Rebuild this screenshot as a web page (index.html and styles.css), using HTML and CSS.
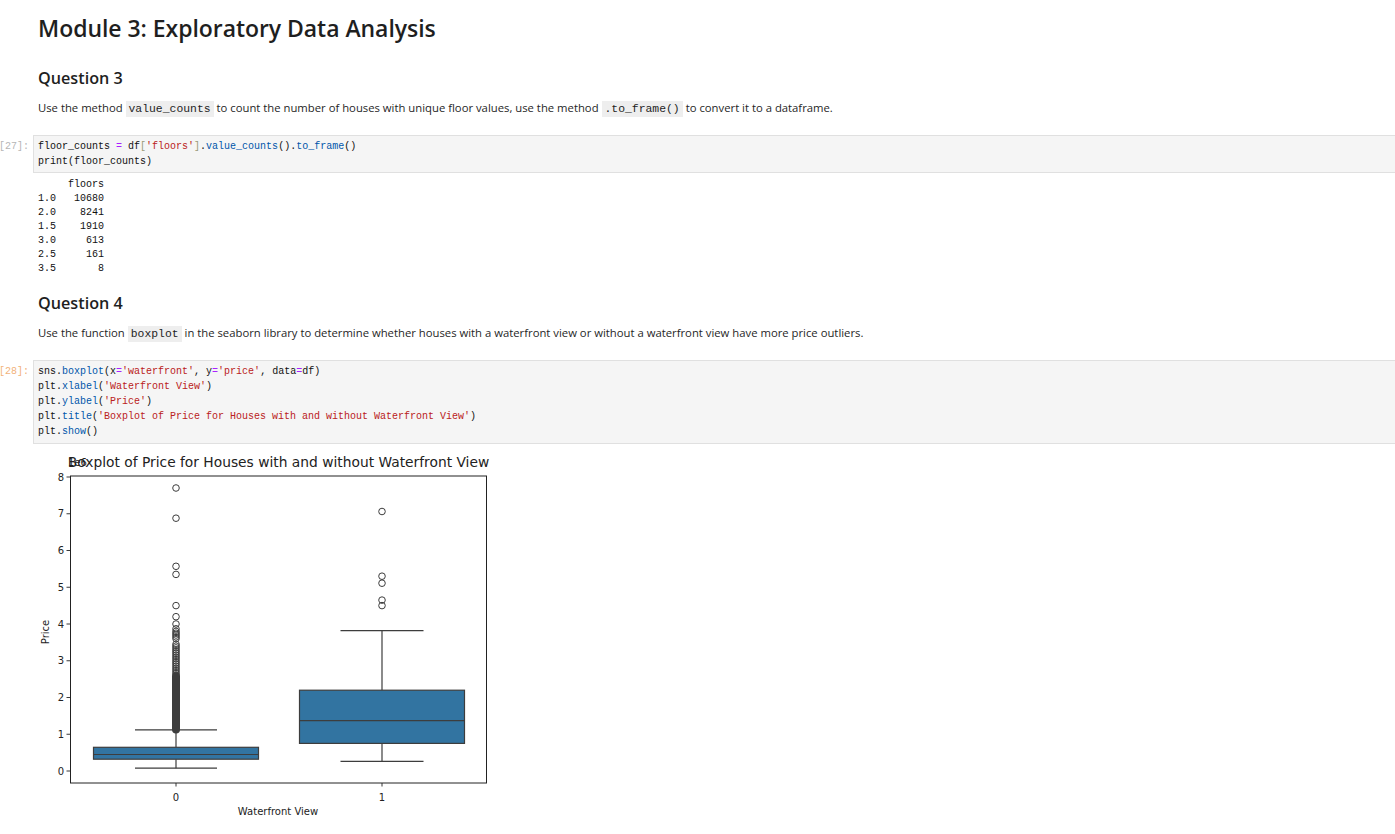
FILE: index.html
```html
<!DOCTYPE html>
<html>
<head>
<meta charset="utf-8">
<link rel="stylesheet" href="styles.css">
</head>
<body>
<div class="notebook">
  <div class="row md">
    <div class="prompt"></div>
    <div class="content">
      <h1 class="h1">Module 3: Exploratory Data Analysis</h1>
      <h2 class="h2">Question 3</h2>
      <p class="para">Use the method <code class="ic">value_counts</code> to count the number of houses with unique floor values, use the method <code class="ic">.to_frame()</code> to convert it to a dataframe.</p>
    </div>
  </div>

  <div class="row code-row first-code">
    <div class="prompt"><span>[27]:</span></div>
    <div class="codebox"><pre class="code">floor_counts <span class="op">=</span> df<span class="br">[</span><span class="st">'floors'</span><span class="br">]</span>.<span class="pr">value_counts</span>().<span class="pr">to_frame</span>()
print(floor_counts)</pre></div>
  </div>
  <div class="row">
    <div class="prompt"></div>
    <pre class="output">     floors
1.0   10680
2.0    8241
1.5    1910
3.0     613
2.5     161
3.5       8</pre>
  </div>

  <div class="row md">
    <div class="prompt"></div>
    <div class="content">
      <h2 class="h2 q4">Question 4</h2>
      <p class="para">Use the function <code class="ic">boxplot</code> in the seaborn library to determine whether houses with a waterfront view or without a waterfront view have more price outliers.</p>
    </div>
  </div>

  <div class="row code-row">
    <div class="prompt active"><span>[28]:</span></div>
    <div class="codebox tall"><pre class="code">sns.<span class="pr">boxplot</span>(x<span class="op">=</span><span class="st">'waterfront'</span>, y<span class="op">=</span><span class="st">'price'</span>, data<span class="op">=</span>df)
plt.<span class="pr">xlabel</span>(<span class="st">'Waterfront View'</span>)
plt.<span class="pr">ylabel</span>(<span class="st">'Price'</span>)
plt.<span class="pr">title</span>(<span class="st">'Boxplot of Price for Houses with and without Waterfront View'</span>)
plt.<span class="pr">show</span>()</pre></div>
  </div>

  <div class="row plot-row">
    <svg class="plot" width="470" height="380" viewBox="0 0 470 380" xmlns="http://www.w3.org/2000/svg">
      <g class="ax-text">
        <text x="245.5" y="17" text-anchor="middle" font-size="13.8">Boxplot of Price for Houses with and without Waterfront View</text>
        <text x="35" y="16" font-size="10">1e6</text>
      </g>
      <!-- y ticks -->
      <g stroke="#222" stroke-width="0.9">
        <line x1="33.5" y1="321" x2="37" y2="321"/>
        <line x1="33.5" y1="284.25" x2="37" y2="284.25"/>
        <line x1="33.5" y1="247.5" x2="37" y2="247.5"/>
        <line x1="33.5" y1="210.75" x2="37" y2="210.75"/>
        <line x1="33.5" y1="174" x2="37" y2="174"/>
        <line x1="33.5" y1="137.25" x2="37" y2="137.25"/>
        <line x1="33.5" y1="100.5" x2="37" y2="100.5"/>
        <line x1="33.5" y1="63.75" x2="37" y2="63.75"/>
        <line x1="33.5" y1="27" x2="37" y2="27"/>
        <line x1="143" y1="333" x2="143" y2="336.5"/>
        <line x1="349" y1="333" x2="349" y2="336.5"/>
      </g>
      <g class="ax-text" font-size="10" text-anchor="end">
        <text x="31" y="324.5">0</text>
        <text x="31" y="287.75">1</text>
        <text x="31" y="251">2</text>
        <text x="31" y="214.25">3</text>
        <text x="31" y="177.5">4</text>
        <text x="31" y="140.75">5</text>
        <text x="31" y="104">6</text>
        <text x="31" y="67.25">7</text>
        <text x="31" y="30.5">8</text>
      </g>
      <g class="ax-text" font-size="10" text-anchor="middle">
        <text x="143" y="350.5">0</text>
        <text x="349" y="350.5">1</text>
        <text x="245" y="365">Waterfront View</text>
        <text x="0" y="0" transform="translate(15.5 182) rotate(-90)">Price</text>
      </g>

      <!-- group 0 -->
      <g stroke="#3d3d3d" stroke-width="1.2" fill="none">
        <line x1="143" y1="309.2" x2="143" y2="318.2"/>
        <line x1="102" y1="318.2" x2="184" y2="318.2"/>
        <line x1="143" y1="297.3" x2="143" y2="279.8"/>
        <line x1="102" y1="279.8" x2="184" y2="279.8"/>
        <rect x="60.5" y="297.3" width="165" height="11.9" fill="#3274a1"/>
        <line x1="60.5" y1="304.5" x2="225.5" y2="304.5"/>
      </g>
      <g stroke="#3d3d3d" fill="none">
        <line x1="143" y1="279.5" x2="143" y2="226" stroke-width="8" stroke-linecap="round"/>
        <g stroke-width="1">
          <circle cx="143" cy="223.6" r="3.3"/>
          <circle cx="143" cy="221.8" r="3.3"/>
          <circle cx="143" cy="219.9" r="3.3"/>
          <circle cx="143" cy="218.1" r="3.3"/>
          <circle cx="143" cy="216.3" r="3.3"/>
          <circle cx="143" cy="214.4" r="3.3"/>
          <circle cx="143" cy="212.6" r="3.3"/>
          <circle cx="143" cy="210.8" r="3.3"/>
          <circle cx="143" cy="208.9" r="3.3"/>
          <circle cx="143" cy="207.1" r="3.3"/>
          <circle cx="143" cy="205.3" r="3.3"/>
          <circle cx="143" cy="203.4" r="3.3"/>
          <circle cx="143" cy="201.6" r="3.3"/>
          <circle cx="143" cy="199.8" r="3.3"/>
          <circle cx="143" cy="197.9" r="3.3"/>
          <circle cx="143" cy="196.1" r="3.3"/>
          <circle cx="143" cy="194.2" r="3.3"/>
          <circle cx="143" cy="188.7" r="3.3"/>
          <circle cx="143" cy="186.9" r="3.3"/>
          <circle cx="143" cy="185" r="3.3"/>
          <circle cx="143" cy="183.2" r="3.3"/>
          <circle cx="143" cy="181.4" r="3.3"/>
          <circle cx="143" cy="178.8" r="3.3"/>
          <circle cx="143" cy="174" r="3.3"/>
          <circle cx="143" cy="166.7" r="3.3"/>
          <circle cx="143" cy="155.6" r="3.3"/>
          <circle cx="143" cy="124.4" r="3.3"/>
          <circle cx="143" cy="116.3" r="3.3"/>
          <circle cx="143" cy="68.2" r="3.3"/>
          <circle cx="143" cy="38" r="3.3"/>
        </g>
      </g>

      <!-- group 1 -->
      <g stroke="#3d3d3d" stroke-width="1.2" fill="none">
        <line x1="349" y1="293.4" x2="349" y2="311.4"/>
        <line x1="307.5" y1="311.4" x2="390.5" y2="311.4"/>
        <line x1="349" y1="240.2" x2="349" y2="180.6"/>
        <line x1="307.5" y1="180.6" x2="390.5" y2="180.6"/>
        <rect x="266.5" y="240.2" width="165" height="53.2" fill="#3274a1"/>
        <line x1="266.5" y1="270.6" x2="431.5" y2="270.6"/>
      </g>
      <g stroke="#3d3d3d" stroke-width="1" fill="none">
        <circle cx="349" cy="155.6" r="3.3"/>
        <circle cx="349" cy="150.1" r="3.3"/>
        <circle cx="349" cy="133.2" r="3.3"/>
        <circle cx="349" cy="126.2" r="3.3"/>
        <circle cx="349" cy="61.5" r="3.3"/>
      </g>

      <rect x="37.5" y="26" width="416" height="307" fill="none" stroke="#222" stroke-width="1"/>
    </svg>
  </div>
</div>
</body>
</html>
```
FILE: styles.css
```css
html, body {
  margin: 0;
  padding: 0;
  background: #ffffff;
}
body {
  font-family: "Open Sans", "Noto Sans", sans-serif;
  color: rgba(0, 0, 0, 0.87);
  width: 1395px;
  height: 834px;
  overflow: hidden;
}
.notebook {
  padding-top: 14px;
}
.row {
  display: flex;
  align-items: flex-start;
}
.prompt {
  width: 33px;
  flex: 0 0 33px;
  box-sizing: border-box;
  padding-right: 4px;
  display: flex;
  justify-content: flex-end;
  font-family: "Liberation Mono", "DejaVu Sans Mono", monospace;
  font-size: 10px;
  line-height: 15px;
  color: #b5b5b5;
  white-space: nowrap;
}
.prompt span {
  flex: none;
}
.prompt.active {
  color: #f2b27a;
}
.content {
  padding-left: 5px;
}
.h1 {
  margin: 0;
  font-size: 23px;
  line-height: 28px;
  font-weight: 600;
  color: #1f1f1f;
  letter-spacing: -0.05px;
}
.h2 {
  margin: 25px 0 0 0;
  font-size: 16.2px;
  line-height: 22px;
  font-weight: 600;
  color: #1f1f1f;
}
.h2.q4 {
  margin-top: 16px;
}
.para {
  margin: 10px 0 0 0;
  font-size: 11.3px;
  line-height: 18px;
  color: #1f1f1f;
}
.ic {
  font-family: "Liberation Mono", "DejaVu Sans Mono", monospace;
  font-size: 11.4px;
  background: #eeeeee;
  padding: 2px 3px;
}
.code-row {
  margin-top: 17px;
}
.code-row .prompt {
  padding-top: 4px;
}
.codebox {
  flex: 1;
  background: #f5f5f5;
  border: 1px solid #e0e0e0;
  border-right: none;
  padding: 3px 4px 3px 4px;
}
.codebox.tall {
  padding-bottom: 4px;
}
.code {
  margin: 0;
  font-family: "Liberation Mono", "DejaVu Sans Mono", monospace;
  font-size: 10px;
  line-height: 15px;
  color: #111;
}
.op { color: #aa22ff; }
.st { color: #ba2121; }
.pr { color: #0055aa; }
.br { color: #999977; }
.output {
  margin: 5px 0 0 5px;
  font-family: "Liberation Mono", "DejaVu Sans Mono", monospace;
  font-size: 10px;
  line-height: 14px;
  color: #111;
}
.plot-row {
  margin-top: 6px;
  padding-left: 33px;
}
.plot {
  display: block;
}
.ax-text {
  font-family: "DejaVu Sans", sans-serif;
  fill: #222;
}
```
